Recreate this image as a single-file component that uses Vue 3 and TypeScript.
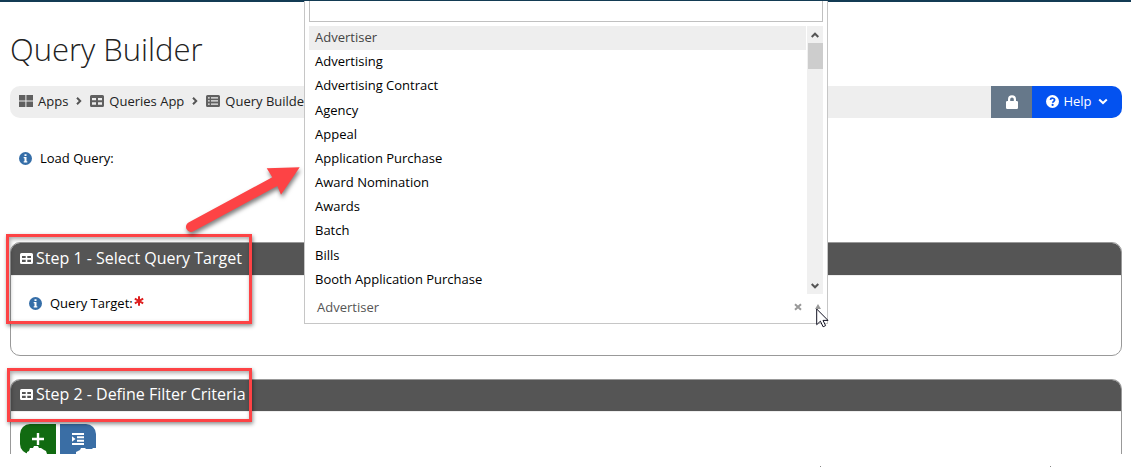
<script setup lang="ts">
import { ref } from 'vue'

const search = ref('')
const target = ref('Advertiser')
const targets: string[] = [
  'Advertiser',
  'Advertising',
  'Advertising Contract',
  'Agency',
  'Appeal',
  'Application Purchase',
  'Award Nomination',
  'Awards',
  'Batch',
  'Bills',
  'Booth Application Purchase',
]
</script>

<template>
  <div class="page">
    <div class="topbar"></div>
    <main class="main">
      <h1>Query Builder</h1>

      <div class="toolbar">
        <nav class="crumbs" aria-label="Breadcrumb">
          <a href="#apps">
            <svg class="icon" viewBox="0 0 14 12"><path d="M0 0h6.400v5.500H0zM7.400 0H14v5.500H7.400zM0 6.500h6.400V12H0zM7.400 6.500H14V12H7.400z" /></svg>
            <span>Apps</span>
          </a>
          <svg class="chevron" viewBox="0 0 6 8"><path d="M1 .8 4.200 4 1 7.200" /></svg>
          <a href="#queries">
            <svg class="icon" viewBox="0 0 14 12"><path fill-rule="evenodd" d="M1.500 0h11A1.500 1.500 0 0 1 14 1.500v9a1.500 1.500 0 0 1-1.500 1.500h-11A1.500 1.500 0 0 1 0 10.500v-9A1.500 1.500 0 0 1 1.500 0zM2 3v2.300h4V3zM8 3v2.300h4V3zM2 7.200v2.600h4V7.200zM8 7.200v2.600h4V7.200z" /></svg>
            <span>Queries App</span>
          </a>
          <svg class="chevron" viewBox="0 0 6 8"><path d="M1 .8 4.200 4 1 7.200" /></svg>
          <a href="#builder">
            <svg class="icon" viewBox="0 0 14 12"><path fill-rule="evenodd" d="M1.500 0h11A1.500 1.500 0 0 1 14 1.500v9a1.500 1.500 0 0 1-1.500 1.500h-11A1.500 1.500 0 0 1 0 10.500v-9A1.500 1.500 0 0 1 1.500 0zM2 2.200v1.300h1.700V2.200zM5 2.200v1.300h7V2.200zM2 5.300v1.300h1.700V5.300zM5 5.300v1.300h7V5.300zM2 8.400v1.300h1.700V8.400zM5 8.400v1.300h7V8.400z" /></svg>
            <span>Query Builder</span>
          </a>
        </nav>
        <button class="lock" type="button" aria-label="Lock">
          <svg viewBox="0 0 12 14"><path fill-rule="evenodd" d="M2 6V4.200a4 4 0 0 1 8 0V6h.8A1.200 1.200 0 0 1 12 7.200v5.600a1.200 1.200 0 0 1-1.200 1.200H1.200A1.200 1.200 0 0 1 0 12.800V7.200A1.200 1.200 0 0 1 1.200 6zm2.200 0h3.600V4.200a1.800 1.800 0 0 0-3.600 0z" /></svg>
        </button>
        <button class="help" type="button">
          <svg class="help-mark" viewBox="0 0 13 13"><circle cx="6.500" cy="6.500" r="6.500" fill="#fff" /><path d="M4.400 4.900C4.600 2.600 8.600 2.700 8.600 5c0 1.400-1.900 1.500-1.900 2.800" fill="none" stroke="#0352f0" stroke-width="1.700" /><circle cx="6.600" cy="9.900" r="1.100" fill="#0352f0" /></svg>
          <span>Help</span>
          <svg class="help-caret" viewBox="0 0 10 7"><path d="M1.200 1.400 5 5 8.800 1.400" /></svg>
        </button>
      </div>

      <div class="field load">
        <svg class="info" viewBox="0 0 13 13"><circle cx="6.500" cy="6.500" r="6.500" /><path d="M5.500 2.200h2v1.900h-2zM4.700 5h2.800v4.200h.8v1.300H4.700V9.200h.8V6.300h-.8z" /></svg>
        <span>Load Query:</span>
      </div>

      <section class="panel first">
        <h2>
          <svg class="head-icon" viewBox="0 0 13 11"><path fill-rule="evenodd" d="M1.500 0h10A1.500 1.500 0 0 1 13 1.500v8a1.500 1.500 0 0 1-1.500 1.500h-10A1.500 1.500 0 0 1 0 9.500v-8A1.500 1.500 0 0 1 1.500 0zM2 3v2h3.700V3zM7.300 3v2H11V3zM2 6.700v2.300h3.700V6.700zM7.300 6.700v2.300H11V6.700z" /></svg>
          Step 1 - Select Query Target
        </h2>
        <div class="field">
          <svg class="info" viewBox="0 0 13 13"><circle cx="6.500" cy="6.500" r="6.500" /><path d="M5.500 2.200h2v1.900h-2zM4.700 5h2.800v4.200h.8v1.300H4.700V9.200h.8V6.300h-.8z" /></svg>
          <label for="query-target">Query Target:</label>
          <svg class="required" viewBox="0 0 10 10" role="img" aria-label="required"><path d="M5 .2v9.600M.8 2.700l8.400 4.600M9.200 2.700.8 7.300" /></svg>
        </div>
      </section>

      <section class="panel second">
        <h2>
          <svg class="head-icon" viewBox="0 0 13 11"><path fill-rule="evenodd" d="M1.500 0h10A1.500 1.500 0 0 1 13 1.500v8a1.500 1.500 0 0 1-1.500 1.500h-10A1.500 1.500 0 0 1 0 9.500v-8A1.500 1.500 0 0 1 1.500 0zM2 3v2h3.700V3zM7.300 3v2H11V3zM2 6.700v2.300h3.700V6.700zM7.300 6.700v2.300H11V6.700z" /></svg>
          Step 2 - Define Filter Criteria
        </h2>
        <div class="actions">
          <button class="add" type="button" aria-label="Add filter">
            <svg viewBox="0 0 12 12"><path d="M6 0v12M0 6h12" stroke="#fff" stroke-width="2.400" /></svg>
          </button>
          <button class="group" type="button" aria-label="Add group">
            <svg viewBox="0 0 12 12"><path d="M0 1h12M5 4.300h7M5 7.700h7M0 11h12" stroke="#fff" stroke-width="1.900" /><path d="M0 3.200 3.500 6 0 8.800z" fill="#fff" /></svg>
          </button>
        </div>
      </section>
      <div class="ticks"><i></i><i></i></div>
    </main>

    <div class="dropdown">
      <input v-model="search" class="search" type="text" aria-label="Search query targets" />
      <div class="list">
        <ul role="listbox" aria-label="Query targets">
          <li
            v-for="item in targets"
            :key="item"
            role="option"
            :aria-selected="item === target"
            :class="{ active: item === target }"
            @click="target = item"
          >{{ item }}</li>
        </ul>
        <div class="scroll" aria-hidden="true">
          <svg viewBox="0 0 8 6"><path d="M.7 5 4 1.700 7.300 5" /></svg>
          <span class="thumb"></span>
          <svg viewBox="0 0 8 6"><path d="M.7 1 4 4.300 7.300 1" /></svg>
        </div>
      </div>
      <div class="chosen">
        <button id="query-target" class="value" type="button" aria-haspopup="listbox" aria-expanded="true">{{ target }}</button>
        <button class="clear" type="button" aria-label="Clear">
          <svg viewBox="0 0 8 8"><path d="M1 1.200 7 6.800M7 1.200 1 6.800" /></svg>
        </button>
        <svg class="up" viewBox="0 0 6 5"><path d="M3 0 6 5H0z" /></svg>
      </div>
    </div>

    <div class="mark mark-one"></div>
    <div class="mark mark-two"></div>
    <svg class="arrow" viewBox="0 0 120 76">
      <path d="M5.500 57.500 89.300 12.300 83.700 3.300 116.700 2.300 98 29.700 94.300 21 10.500 66.200A5 5 0 0 1 5.500 57.500z" />
    </svg>
    <svg class="pointer" viewBox="0 0 13 20"><path d="M.7 1v15.700l3.700-3.500 2.700 5.600 2.500-1.200-2.600-5.200h5z" /></svg>
  </div>
</template>

<style>
body {
  margin: 0;
  background: #fff;
}
</style>

<style scoped>
.page {
  position: relative;
  min-height: 100vh;
  overflow: hidden;
  font: 13px/20px "Open Sans", "Noto Sans", sans-serif;
  color: #000;
}
.page * {
  box-sizing: border-box;
}
svg {
  display: block;
  flex: none;
}
button {
  display: flex;
  align-items: center;
  justify-content: center;
  padding: 0;
  border: 0;
  font: inherit;
  cursor: pointer;
}
.topbar {
  height: 2px;
  background: #133b54;
}
.main {
  padding: 26px 9px 0 10px;
}
h1 {
  margin: 0;
  font-size: 31px;
  line-height: 42px;
  font-weight: 300;
  color: #222;
}
.toolbar {
  display: flex;
  height: 32px;
  margin-top: 16px;
  border-radius: 10px;
  overflow: hidden;
  background: #eee;
}
.crumbs {
  flex: 1;
  display: flex;
  align-items: center;
  gap: 8px;
  padding: 0 0 2px 9px;
}
.crumbs a {
  display: flex;
  align-items: center;
  gap: 5px;
  color: #222;
  text-decoration: none;
}
.icon {
  width: 14px;
  height: 12px;
  fill: #606060;
}
.chevron {
  width: 6px;
  height: 8px;
  fill: none;
  stroke: #555;
  stroke-width: 2;
}
.lock {
  width: 41px;
  background: #66788a;
}
.lock svg {
  width: 12px;
  height: 14px;
  fill: #fff;
}
.help {
  width: 90px;
  gap: 4px;
  padding-bottom: 2px;
  background: #0352f0;
  color: #fff;
}
.help-mark {
  width: 13px;
  height: 13px;
}
.help-caret {
  width: 10px;
  height: 7px;
  margin-left: 2px;
  fill: none;
  stroke: #fff;
  stroke-width: 2;
}
.field {
  display: flex;
  align-items: center;
}
.load {
  margin-top: 30px;
  padding-left: 9px;
}
.info {
  width: 13px;
  height: 13px;
  margin-right: 8px;
}
.info circle {
  fill: #356ea8;
}
.info path {
  fill: #fff;
}
.required {
  width: 10px;
  height: 10px;
  margin: 0 0 4px 1px;
  fill: none;
  stroke: #de2020;
  stroke-width: 2;
}
.panel {
  border: 1px solid #999;
  border-radius: 10px;
  overflow: hidden;
}
.panel h2 {
  display: flex;
  align-items: center;
  gap: 3px;
  height: 34px;
  margin: -1px 0 0;
  padding: 0 0 1px 9px;
  border-bottom: 1px solid #eee;
  background: #555;
  color: #fff;
  font-size: 16px;
  font-weight: 400;
}
.panel .head-icon {
  width: 13px;
  height: 11px;
  fill: #fff;
}
.first {
  height: 114px;
  margin-top: 74px;
}
.first .field {
  padding: 17px 18px 0;
}
.second {
  margin-top: 23px;
  border-bottom: 0;
  border-radius: 10px 10px 0 0;
}
.second h2 {
  height: 33px;
  padding-bottom: 2px;
}
.actions {
  display: flex;
  gap: 4px;
  padding: 12px 9px 0;
}
.actions button {
  width: 36px;
  height: 30px;
}
.actions svg {
  width: 12px;
  height: 12px;
}
.add {
  border-radius: 10px 0 0 10px;
  background: #116b11;
  clip-path: polygon(0 0, 36px 0, 36px 30px, 27px 30px, 26px 27px, 24px 26px, 21px 24px, 19px 24px, 18px 22px, 14px 22px, 13px 24px, 10px 24px, 9px 27px, 7px 28px, 7px 30px, 0 30px);
}
.group {
  border-radius: 0 10px 0 0;
  background: #3a6ea5;
  clip-path: polygon(0 0, 36px 0, 36px 24px, 33px 24px, 32px 25px, 26px 25px, 25px 24px, 21px 24px, 20px 26px, 18px 27px, 16px 28px, 16px 30px, 0 30px);
}
.ticks {
  display: flex;
  justify-content: flex-end;
  gap: 229px;
  padding: 12px 71px 0 0;
}
.ticks i {
  width: 1px;
  height: 1px;
  background: #888;
}
.dropdown {
  position: absolute;
  top: 1px;
  left: 304px;
  width: 524px;
  border: 1px solid #c6c6c6;
  border-top: 0;
  background: #fff;
}
.search {
  display: block;
  width: 514px;
  height: 21px;
  margin: 0 4px 4px;
  border: 1px solid #c0c0c0;
  border-top: 0;
  outline: 0;
  font: inherit;
}
.list {
  display: flex;
  gap: 1px;
  height: 268px;
  margin: 0 4px;
}
ul {
  flex: 1;
  display: grid;
  grid-auto-rows: 1fr;
  height: 266px;
  margin: 0;
  padding: 0;
  list-style: none;
}
li {
  padding: 0 6px;
  line-height: 22px;
}
li.active {
  background: #eee;
  color: #444;
}
.scroll {
  display: flex;
  flex-direction: column;
  align-items: center;
  width: 16px;
  padding: 6px 0 5px;
  background: #f0f0f0;
}
.scroll svg {
  width: 8px;
  height: 6px;
  fill: none;
  stroke: #555;
  stroke-width: 2;
}
.thumb {
  width: 15px;
  height: 26px;
  margin: 5px 0 auto;
  background: #cdcdcd;
}
.chosen {
  display: flex;
  align-items: center;
  height: 29px;
  padding: 0 6px 3px 12px;
}
.value {
  flex: 1;
  justify-content: flex-start;
  background: none;
  color: #555;
}
.clear {
  background: none;
}
.clear svg {
  width: 8px;
  height: 8px;
  fill: none;
  stroke: #999;
  stroke-width: 2;
}
.up {
  width: 6px;
  height: 5px;
  margin: 0 0 2px 13px;
  fill: #999;
}
.mark {
  position: absolute;
  width: 246px;
  border: 3px solid #fd4345;
  box-shadow: 1px 2px 4px rgba(0, 0, 0, 0.45), inset 1px 2px 4px rgba(0, 0, 0, 0.35);
  pointer-events: none;
}
.mark-one {
  top: 234px;
  left: 6px;
  height: 90px;
}
.mark-two {
  top: 368px;
  left: 7px;
  width: 245px;
  height: 54px;
}
.arrow {
  position: absolute;
  top: 165px;
  left: 183px;
  width: 120px;
  height: 76px;
  overflow: visible;
  fill: #fd4345;
  filter: drop-shadow(1px 3px 2px rgba(0, 0, 0, 0.5));
  pointer-events: none;
}
.pointer {
  position: absolute;
  top: 308px;
  left: 816px;
  width: 13px;
  height: 20px;
  fill: #fff;
  stroke: #112;
  stroke-width: 1;
  pointer-events: none;
}
</style>
